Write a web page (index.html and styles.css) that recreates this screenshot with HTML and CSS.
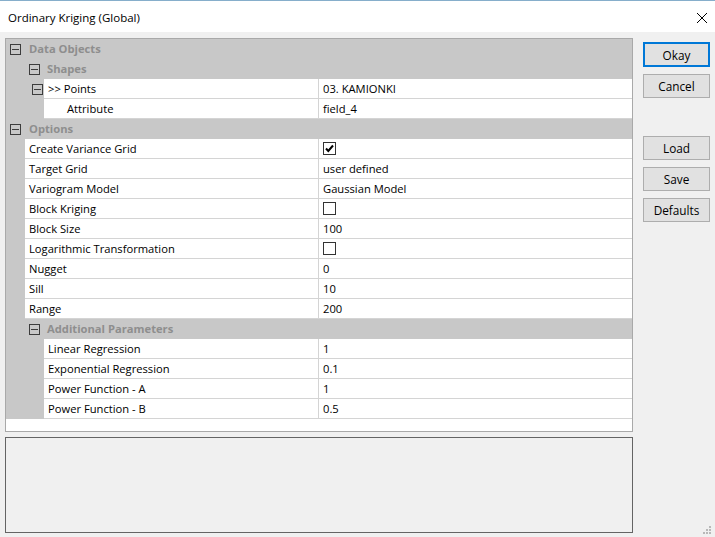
FILE: index.html
```html
<!DOCTYPE html>
<html>
<head>
<meta charset="utf-8">
<link rel="stylesheet" href="styles.css">
</head>
<body>
<div class="window">
  <div class="titlebar">
    <span class="title">Ordinary Kriging (Global)</span>
    <svg class="close" width="12" height="12" viewBox="0 0 12 12"><path d="M1 1 L11 11 M11 1 L1 11" stroke="#000" stroke-width="1" fill="none"/></svg>
  </div>
  <div class="body">
    <div class="left">
      <div class="grid">
        <div class="cat lvl0"><span class="box"></span><span class="ctext">Data Objects</span></div>
        <div class="cat lvl1"><span class="box"></span><span class="ctext">Shapes</span></div>
        <div class="row deep"><div class="margin"><span class="box pbox"></span></div><div class="name">&gt;&gt; Points</div><div class="value">03. KAMIONKI</div></div>
        <div class="row deep"><div class="margin"></div><div class="name sub">Attribute</div><div class="value">field_4</div></div>
        <div class="cat lvl0"><span class="box"></span><span class="ctext">Options</span></div>
        <div class="row"><div class="margin"></div><div class="name">Create Variance Grid</div><div class="value"><span class="check"><svg width="11" height="11" viewBox="0 0 11 11"><path d="M2 5.5 L4.3 8 L9 2.5" stroke="#000" stroke-width="2" fill="none"/></svg></span></div></div>
        <div class="row"><div class="margin"></div><div class="name">Target Grid</div><div class="value">user defined</div></div>
        <div class="row"><div class="margin"></div><div class="name">Variogram Model</div><div class="value">Gaussian Model</div></div>
        <div class="row"><div class="margin"></div><div class="name">Block Kriging</div><div class="value"><span class="check"></span></div></div>
        <div class="row"><div class="margin"></div><div class="name">Block Size</div><div class="value">100</div></div>
        <div class="row"><div class="margin"></div><div class="name">Logarithmic Transformation</div><div class="value"><span class="check"></span></div></div>
        <div class="row"><div class="margin"></div><div class="name">Nugget</div><div class="value">0</div></div>
        <div class="row"><div class="margin"></div><div class="name">Sill</div><div class="value">10</div></div>
        <div class="row"><div class="margin"></div><div class="name">Range</div><div class="value">200</div></div>
        <div class="cat lvl1"><span class="box"></span><span class="ctext">Additional Parameters</span></div>
        <div class="row deep"><div class="margin"></div><div class="name">Linear Regression</div><div class="value">1</div></div>
        <div class="row deep"><div class="margin"></div><div class="name">Exponential Regression</div><div class="value">0.1</div></div>
        <div class="row deep"><div class="margin"></div><div class="name">Power Function - A</div><div class="value">1</div></div>
        <div class="row deep"><div class="margin"></div><div class="name">Power Function - B</div><div class="value">0.5</div></div>
      </div>
      <div class="desc"></div>
    </div>
    <div class="buttons">
      <div class="btn default">Okay</div>
      <div class="btn">Cancel</div>
      <div class="btn spaced">Load</div>
      <div class="btn">Save</div>
      <div class="btn">Defaults</div>
    </div>
  </div>
  <svg class="grip" width="10" height="10" viewBox="0 0 10 10">
    <rect x="7" y="1" width="2" height="2" fill="#b8b8b8"/>
    <rect x="4" y="4" width="2" height="2" fill="#b8b8b8"/>
    <rect x="7" y="4" width="2" height="2" fill="#b8b8b8"/>
    <rect x="1" y="7" width="2" height="2" fill="#b8b8b8"/>
    <rect x="4" y="7" width="2" height="2" fill="#b8b8b8"/>
    <rect x="7" y="7" width="2" height="2" fill="#b8b8b8"/>
  </svg>
</div>
</body>
</html>
```
FILE: styles.css
```css
html, body {
  margin: 0;
  padding: 0;
}
body {
  width: 715px;
  height: 537px;
  overflow: hidden;
  font-family: "Open Sans", "Noto Sans", sans-serif;
  font-size: 11.2px;
  color: #000;
}
.window {
  position: relative;
  width: 715px;
  height: 537px;
  background: #f0f0f0;
  display: flex;
  flex-direction: column;
}
.titlebar {
  height: 31px;
  border-top: 1px solid #86aecb;
  background: #fff;
  display: flex;
  align-items: center;
  justify-content: space-between;
  padding: 0 7px 0 8px;
  flex: none;
}
.title {
  font-size: 11.5px;
  padding-top: 2px;
}
.close {
  margin-top: 2px;
}
.body {
  display: flex;
  flex: 1;
}
.left {
  padding: 6px 0 0 5px;
  width: 628px;
  display: flex;
  flex-direction: column;
  gap: 5px;
}
.grid {
  height: 394px;
  box-sizing: border-box;
  border: 1px solid #a9a9a9;
  background: #fff;
  display: flex;
  flex-direction: column;
}
.cat {
  height: 20px;
  background: #c8c8c8;
  display: flex;
  align-items: center;
  flex: none;
}
.ctext {
  color: #8e8e8e;
  font-weight: bold;
  margin-top: -1px;
}
.lvl0 {
  padding-left: 4px;
}
.lvl0 .ctext {
  margin-left: 8px;
}
.lvl1 {
  padding-left: 23px;
}
.lvl1 .ctext {
  margin-left: 7px;
}
.box {
  width: 11px;
  height: 11px;
  box-sizing: border-box;
  border: 1px solid #3c3c3c;
  position: relative;
  flex: none;
}
.box::after {
  content: "";
  position: absolute;
  left: 1px;
  top: 4px;
  width: 7px;
  height: 1px;
  background: #3c3c3c;
}
.row {
  height: 20px;
  display: flex;
  flex: none;
}
.margin {
  width: 19px;
  background: #c8c8c8;
  flex: none;
  display: flex;
  align-items: center;
}
.deep .margin {
  width: 38px;
}
.pbox {
  margin-left: 26px;
}
.name {
  flex: none;
  width: 294px;
  box-sizing: border-box;
  border-right: 1px solid #d4d4d4;
  border-bottom: 1px solid #d4d4d4;
  padding-left: 4px;
  line-height: 19px;
  white-space: nowrap;
}
.deep .name {
  width: 275px;
  padding-left: 4px;
}
.deep .name.sub {
  padding-left: 23px;
}
.value {
  flex: 1;
  border-bottom: 1px solid #d4d4d4;
  padding-left: 4px;
  line-height: 19px;
  display: flex;
  align-items: center;
}
.check {
  width: 13px;
  height: 13px;
  box-sizing: border-box;
  border: 1px solid #333;
  background: #fff;
  display: flex;
  align-items: center;
  justify-content: center;
}
.desc {
  height: 96px;
  box-sizing: border-box;
  border: 1px solid #646464;
  background: #f0f0f0;
}
.buttons {
  margin-left: 10px;
  padding-top: 10px;
  width: 67px;
  display: flex;
  flex-direction: column;
  gap: 7px;
}
.btn {
  height: 24px;
  box-sizing: border-box;
  border: 1px solid #adadad;
  background: #e1e1e1;
  display: flex;
  align-items: center;
  justify-content: center;
  font-size: 11.8px;
}
.btn.default {
  height: 25px;
  border: 2px solid #0078d7;
}
.btn.spaced {
  margin-top: 31px;
}
.grip {
  position: absolute;
  right: 3px;
  bottom: 2px;
}
```
